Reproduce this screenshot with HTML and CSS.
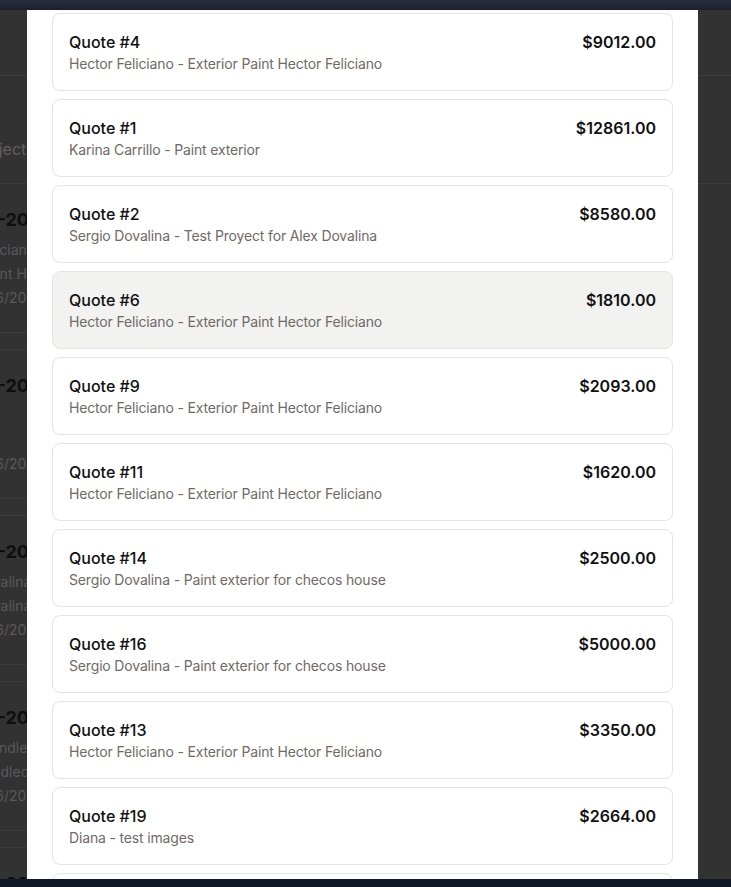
FILE: index.html
```html
<!DOCTYPE html>
<html lang="en">
<head>
<meta charset="utf-8">
<title>Quotes</title>
<link rel="stylesheet" href="styles.css">
</head>
<body>
<div class="topbar"></div>
<div class="stage">
  <main class="page">
    <header class="page-head"></header>
    <div class="toolbar"><span class="search">Search by project</span></div>
    <section class="bg-list">
      <article class="bg-row">
        <h3 class="bg-title">QT-2025-0004</h3>
        <p class="bg-line">Hector Feliciano</p>
        <p class="bg-line shift-a">Exterior Paint Hector</p>
        <p class="bg-line bg-date">01/16/2025</p>
      </article>
      <article class="bg-row">
        <h3 class="bg-title">QT-2025-0001</h3>
        <p class="bg-line">Karina</p>
        <p class="bg-line">Paint</p>
        <p class="bg-line bg-date">01/16/2025</p>
      </article>
      <article class="bg-row">
        <h3 class="bg-title">QT-2025-0002</h3>
        <p class="bg-line">Sergio Dovalina</p>
        <p class="bg-line">Sergio Dovalina</p>
        <p class="bg-line bg-date">01/16/2025</p>
      </article>
      <article class="bg-row">
        <h3 class="bg-title">QT-2025-0006</h3>
        <p class="bg-line">Joseph Handled</p>
        <p class="bg-line">Works Handled</p>
        <p class="bg-line bg-date">01/16/2025</p>
      </article>
      <article class="bg-row">
        <h3 class="bg-title">QT-2025-0009</h3>
        <p class="bg-line">Hector Feliciano</p>
      </article>
    </section>
  </main>

  <div class="modal">
    <ul class="quote-list">
      <li class="quote"><div class="quote-main"><span class="quote-title">Quote #4</span><span class="quote-sub">Hector Feliciano - Exterior Paint Hector Feliciano</span></div><span class="quote-price">$9012.00</span></li>
      <li class="quote"><div class="quote-main"><span class="quote-title">Quote #1</span><span class="quote-sub">Karina Carrillo - Paint exterior</span></div><span class="quote-price">$12861.00</span></li>
      <li class="quote"><div class="quote-main"><span class="quote-title">Quote #2</span><span class="quote-sub">Sergio Dovalina - Test Proyect for Alex Dovalina</span></div><span class="quote-price">$8580.00</span></li>
      <li class="quote is-hover"><div class="quote-main"><span class="quote-title">Quote #6</span><span class="quote-sub">Hector Feliciano - Exterior Paint Hector Feliciano</span></div><span class="quote-price">$1810.00</span></li>
      <li class="quote"><div class="quote-main"><span class="quote-title">Quote #9</span><span class="quote-sub">Hector Feliciano - Exterior Paint Hector Feliciano</span></div><span class="quote-price">$2093.00</span></li>
      <li class="quote"><div class="quote-main"><span class="quote-title">Quote #11</span><span class="quote-sub">Hector Feliciano - Exterior Paint Hector Feliciano</span></div><span class="quote-price">$1620.00</span></li>
      <li class="quote"><div class="quote-main"><span class="quote-title">Quote #14</span><span class="quote-sub">Sergio Dovalina - Paint exterior for checos house</span></div><span class="quote-price">$2500.00</span></li>
      <li class="quote"><div class="quote-main"><span class="quote-title">Quote #16</span><span class="quote-sub">Sergio Dovalina - Paint exterior for checos house</span></div><span class="quote-price">$5000.00</span></li>
      <li class="quote"><div class="quote-main"><span class="quote-title">Quote #13</span><span class="quote-sub">Hector Feliciano - Exterior Paint Hector Feliciano</span></div><span class="quote-price">$3350.00</span></li>
      <li class="quote"><div class="quote-main"><span class="quote-title">Quote #19</span><span class="quote-sub">Diana - test images</span></div><span class="quote-price">$2664.00</span></li>
      <li class="quote"><div class="quote-main"><span class="quote-title">Quote #20</span><span class="quote-sub">Diana - test images</span></div><span class="quote-price">$1200.00</span></li>
    </ul>
  </div>
</div>
<div class="bottombar"></div>
</body>
</html>
```

FILE: styles.css
```css
* { box-sizing: border-box; }

html, body {
  margin: 0;
  padding: 0;
  height: 887px;
  overflow: hidden;
}

body {
  display: flex;
  flex-direction: column;
  background: #323232;
  font-family: Inter, "Noto Sans", sans-serif;
}

.topbar {
  height: 10px;
  flex: none;
  background: linear-gradient(#262d41, #1b2030);
}

.bottombar {
  height: 8px;
  flex: none;
  background: #111827;
}

.stage {
  flex: 1;
  position: relative;
  overflow: hidden;
}

/* dimmed page behind the modal */
.page {
  height: 100%;
  overflow: hidden;
}

.page-head {
  height: 66px;
  border-bottom: 1px solid #3c3c3c;
}

.toolbar {
  height: 108px;
  border-bottom: 1px solid #3c3c3c;
  display: flex;
  align-items: center;
  margin-left: -107px;
  padding-top: 38px;
  white-space: nowrap;
}

.search {
  font-size: 16px;
  color: #5e5e5e;
}

.bg-list {
  display: flex;
  flex-direction: column;
  gap: 16px;
  width: 660px;
  margin-left: -72px;
}

.bg-row {
  height: 150px;
  border-top: 1px solid #3c3c3c;
  border-bottom: 1px solid #3c3c3c;
  padding: 22px 0 0 0;
}

.bg-row:first-child {
  border-top: none;
  height: 149px;
}

.bg-title {
  margin: 0 0 4px;
  padding-left: 45px;
  font-size: 18px;
  line-height: 28px;
  font-weight: 700;
  color: #0e0e0e;
  white-space: nowrap;
}

.bg-line {
  margin: 0;
  font-size: 14px;
  line-height: 24px;
  color: #595959;
  white-space: nowrap;
}

.bg-line.shift-a {
  margin-left: -4px;
}

.bg-line.bg-date {
  padding-left: 42px;
}

/* modal */
.modal {
  position: absolute;
  top: 0;
  left: 27px;
  width: 671px;
  height: 100%;
  background: #ffffff;
  overflow: hidden;
  padding: 3px 25px 0;
}

.quote-list {
  list-style: none;
  margin: 0;
  padding: 0;
  display: flex;
  flex-direction: column;
  gap: 8px;
}

.quote {
  display: flex;
  justify-content: space-between;
  align-items: flex-start;
  border: 1px solid #e4e4e3;
  border-radius: 8px;
  padding: 16px;
  background: #ffffff;
}

.quote.is-hover {
  background: #f2f2f1;
}

.quote-main {
  display: flex;
  flex-direction: column;
}

.quote-title {
  font-size: 16px;
  line-height: 24px;
  font-weight: 500;
  color: #111111;
}

.quote-sub {
  font-size: 14px;
  line-height: 20px;
  letter-spacing: -0.16px;
  color: #6f6a66;
}

.quote-price {
  font-size: 16px;
  line-height: 24px;
  font-weight: 600;
  color: #111111;
}
```
